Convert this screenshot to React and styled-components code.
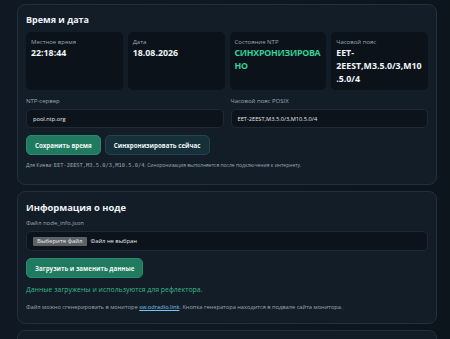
import React from "react";
import styled, { createGlobalStyle } from "styled-components";

const GlobalStyle = createGlobalStyle`
  html, body {
    margin: 0;
    padding: 0;
    background: #0d151e;
  }
  body {
    font-family: "Open Sans", "Noto Sans", sans-serif;
    color: #e6edf3;
    overflow: hidden;
  }
`;

const Page = styled.div`
  display: flex;
  flex-direction: column;
  gap: 6px;
  padding: 4px 13px 0 17px;
  height: 339px;
  box-sizing: border-box;
  background: linear-gradient(90deg, #101923 0%, #0e1821 60%, #0c141c 100%);
`;

const Card = styled.section`
  background: #131d27;
  border: 1px solid #22303c;
  border-radius: 8px;
  padding: ${(p) => p.$pad || "9px 8px"};
  flex-shrink: 0;
`;

const Title = styled.h2`
  margin: 0 0 ${(p) => p.$mb || "6px"};
  font-size: ${(p) => p.$size || "9px"};
  line-height: 12px;
  font-weight: 700;
  color: #eef3f7;
`;

const Stats = styled.div`
  display: grid;
  grid-template-columns: repeat(4, 1fr);
  gap: 5px;
`;

const Stat = styled.div`
  background: #0b121a;
  border-radius: 5px;
  height: 58px;
  box-sizing: border-box;
  padding: 6px 4px 6px 5px;
`;

const StatLabel = styled.div`
  font-size: 6px;
  line-height: 8px;
  color: #9aa6b2;
`;

const StatValue = styled.div`
  margin-top: 1px;
  font-size: 8.8px;
  line-height: 13px;
  font-weight: 700;
  letter-spacing: ${(p) => (p.$ok ? "-0.25px" : "0")};
  color: ${(p) => (p.$ok ? "#34d399" : "#f1f5f9")};
  overflow-wrap: anywhere;
`;

const Fields = styled.div`
  display: grid;
  grid-template-columns: 1fr 1fr;
  gap: 7px;
  margin-top: 7px;
`;

const Field = styled.div`
  display: flex;
  flex-direction: column;
`;

const Label = styled.div`
  font-size: 6px;
  line-height: 8px;
  color: #9aa6b2;
  margin-bottom: 4px;
`;

const Input = styled.div`
  height: 19px;
  box-sizing: border-box;
  background: #0c131b;
  border: 1px solid #1d2935;
  border-radius: 5px;
  padding: 0 6px;
  display: flex;
  align-items: center;
  font-size: 5.7px;
  color: #e2e8ee;
`;

const Buttons = styled.div`
  display: flex;
  gap: 4px;
  margin-top: 7px;
`;

const Button = styled.button`
  height: 20px;
  padding: 0 8px;
  border-radius: 5px;
  font-family: inherit;
  font-size: 6.2px;
  font-weight: 700;
  color: #eef6f3;
  background: ${(p) => (p.$primary ? "#1f7a5f" : "#153039")};
  border: 1px solid ${(p) => (p.$primary ? "#2a8c6d" : "#24434c")};
  cursor: pointer;
`;

const Hint = styled.p`
  margin: ${(p) => p.$m || "6px 0 0"};
  line-height: ${(p) => (p.$ok ? "9px" : "8px")};
  color: ${(p) => (p.$ok ? "#36b88a" : "#9aa6b2")};
  font-size: ${(p) => p.$size || "5px"};

  code {
    font-family: "DejaVu Sans Mono", "Liberation Mono", monospace;
    font-size: 5.4px;
  }

  a {
    color: #7cc4f0;
    text-decoration: underline;
  }
`;

const FileBox = styled(Input)`
  height: 20px;
  padding: 0 6px;
  gap: 4px;
  font-size: 5.8px;
`;

const FileBtn = styled.span`
  background: #5d6266;
  color: #ececec;
  padding: 1px 4px;
  border-radius: 1px;
  font-size: 6px;
  line-height: 7px;
`;

export default function App() {
  return (
    <>
      <GlobalStyle />
      <Page>
        <Card $pad="9px 8px 15px 8px">
          <Title>Время и дата</Title>
          <Stats>
            <Stat>
              <StatLabel>Местное время</StatLabel>
              <StatValue>22:18:44</StatValue>
            </Stat>
            <Stat>
              <StatLabel>Дата</StatLabel>
              <StatValue>18.08.2026</StatValue>
            </Stat>
            <Stat>
              <StatLabel>Состояние NTP</StatLabel>
              <StatValue $ok>СИНХРОНИЗИРОВАНО</StatValue>
            </Stat>
            <Stat>
              <StatLabel>Часовой пояс</StatLabel>
              <StatValue>EET-2EEST,M3.5.0/3,M10.5.0/4</StatValue>
            </Stat>
          </Stats>
          <Fields>
            <Field>
              <Label>NTP-сервер</Label>
              <Input>pool.ntp.org</Input>
            </Field>
            <Field>
              <Label>Часовой пояс POSIX</Label>
              <Input>EET-2EEST,M3.5.0/3,M10.5.0/4</Input>
            </Field>
          </Fields>
          <Buttons>
            <Button $primary>Сохранить время</Button>
            <Button>Синхронизировать сейчас</Button>
          </Buttons>
          <Hint>
            Для Киева: <code>EET-2EEST,M3.5.0/3,M10.5.0/4</code>. Синхронизация
            выполняется после подключения к интернету.
          </Hint>
        </Card>

        <Card $pad="10px 8px 12px 8px">
          <Title $mb="5px" $size="9.4px">Информация о ноде</Title>
          <Label>Файл node_info.json</Label>
          <FileBox>
            <FileBtn>Выберите файл</FileBtn>
            <span>Файл не выбран</span>
          </FileBox>
          <Buttons>
            <Button $primary>Загрузить и заменить данные</Button>
          </Buttons>
          <Hint $ok $m="7px 0 0" $size="6.9px">
            Данные загружены и используются для рефлектора.
          </Hint>
          <Hint $m="9px 0 0" $size="5.7px">
            Файл можно сгенерировать в мониторе <a href="#">sw.odradio.link</a>.
            Кнопка генератора находится в подвале сайта монитора.
          </Hint>
        </Card>

        <Card />
      </Page>
    </>
  );
}
